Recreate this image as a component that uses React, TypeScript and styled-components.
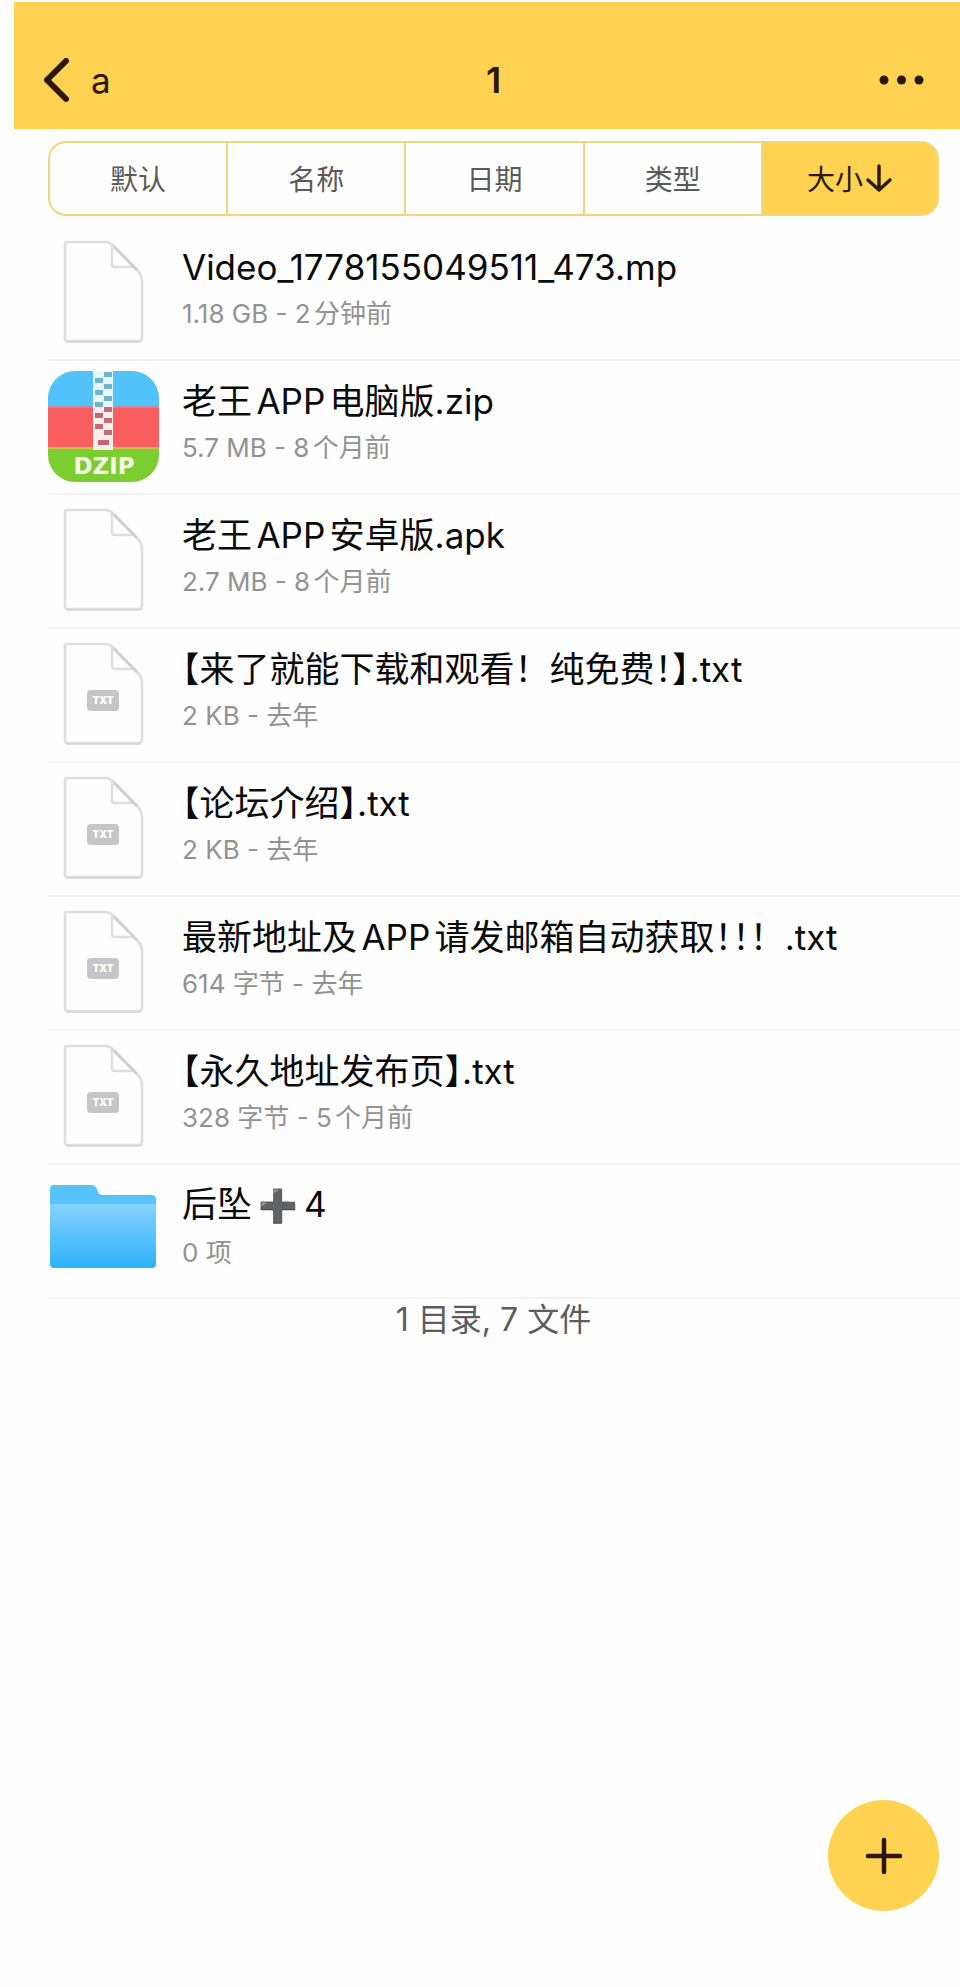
import React from "react";
import styled, { createGlobalStyle } from "styled-components";

const yellow = "#ffd351";
const outline = "#f1d77a";
const ink = "#2b1704";

const GlobalStyle = createGlobalStyle`
  * { box-sizing: border-box; }
  body {
    margin: 0;
    background: #fefefe;
    color: #0a0a0a;
    font-family: Inter, "Noto Sans CJK SC", sans-serif;
    text-autospace: normal;
  }
`;

const Page = styled.div`
  min-height: 100vh;
  padding: 2px 0 0 14px;
`;

const Header = styled.header`
  display: grid;
  grid-template-columns: 1fr auto 1fr;
  align-items: center;
  height: 127px;
  padding: 29px 17px 0 30px;
  background: ${yellow};
  color: ${ink};
  line-height: 48px;
`;

const BackLink = styled.a`
  display: flex;
  align-items: center;
  gap: 21px;
  justify-self: start;
  color: inherit;
  font-size: 35px;
  text-decoration: none;
`;

const Title = styled.h1`
  margin: 0;
  font-size: 36px;
  font-weight: 600;
`;

const Button = styled.button`
  display: flex;
  align-items: center;
  justify-content: center;
  margin: 0;
  padding: 0;
  border: 0;
  background: none;
  color: inherit;
  font: inherit;
  cursor: pointer;
`;

const MenuButton = styled(Button)`
  justify-self: end;
  padding: 12px 18px;
`;

const SortBar = styled.div`
  display: grid;
  grid-template-columns: repeat(5, 1fr);
  margin: 12px 21px 0 34px;
  height: 75px;
`;

const SortButton = styled(Button)<{ $active?: boolean }>`
  border: 2px solid ${outline};
  border-right-width: 0;
  padding-bottom: 2px;
  font-size: 28px;
  color: ${({ $active }) => ($active ? ink : "#5a5a5a")};
  background: ${({ $active }) => ($active ? yellow : "none")};

  &:first-child { border-radius: 18px 0 0 18px; }
  &:last-child { border-radius: 0 18px 18px 0; border-right-width: 2px; }
`;

const FileList = styled.ul`
  margin: 11px 0 0 34px;
  padding: 0;
  list-style: none;
`;

const FileRow = styled.li`
  height: 134px;
  border-bottom: 2px solid #f2f2f2;
`;

const FileLink = styled.a`
  display: flex;
  align-items: center;
  gap: 22px;
  height: 100%;
  color: inherit;
  text-decoration: none;
`;

const FileText = styled.div`
  flex: 1;
  min-width: 0;
  padding-bottom: 4px;
`;

const FileName = styled.div`
  font-size: 35px;
  line-height: 46px;
  white-space: nowrap;
`;

const FileMeta = styled.div`
  font-size: 26px;
  line-height: 48px;
  color: #929292;
`;

const HalfWidth = styled.span`
  font-feature-settings: "halt";
`;

const Tight = styled.span`
  text-autospace: no-autospace;
`;

const HeavyPlus = styled.span`
  margin: 0 6px;
  font-family: "DejaVu Sans", sans-serif;
  font-size: 32px;
  color: #444;
`;

const Summary = styled.p`
  margin: 0 21px 0 34px;
  font-size: 32px;
  line-height: 42px;
  text-align: center;
  color: #5c5c5c;
`;

const AddButton = styled(Button)`
  position: fixed;
  right: 21px;
  bottom: 76px;
  width: 111px;
  height: 111px;
  border-radius: 50%;
  background: ${yellow};
`;

const Icon = styled.svg`
  flex: none;
  display: block;
`;

function DocumentIcon({ label }: { label?: string }) {
  return (
    <Icon width="112" height="112" viewBox="0 0 112 112" aria-hidden="true">
      <path
        d="M19 5H57Q62 5 66 9L89 33Q94 38 94 44V101Q94 104 91 104H19Q17 104 17 101V7Q17 5 19 5Z"
        fill="#fefefe"
        stroke="#dedede"
        strokeWidth="2.6"
      />
      <path d="M64 9V27Q64 30 67 30H85" fill="none" stroke="#dedede" strokeWidth="2.4" strokeLinecap="round" />
      <path d="M66 10L89 33" stroke="#d0d0d0" strokeWidth="2.6" />
      <path d="M18 105H93" stroke="#d4d4d4" strokeWidth="1.5" />
      {label && (
        <>
          <rect x="39" y="51" width="32" height="21" rx="4" fill="#c6c6c8" />
          <text x="55" y="65" fontSize="10" fontWeight="900" textAnchor="middle" fill="#fff">
            {label}
          </text>
        </>
      )}
    </Icon>
  );
}

const leftTeeth = [7, 19, 31, 42, 53];
const rightTeeth = [1, 13, 25, 36, 47, 59];

function ZipIcon() {
  const toothColor = (y: number) => (y < 36 ? "#6fb3cd" : "#c56a70");
  return (
    <Icon width="112" height="112" viewBox="0 0 112 112" aria-hidden="true">
      <defs>
        <clipPath id="zip-shape">
          <rect width="111" height="111" rx="27" />
        </clipPath>
      </defs>
      <g clipPath="url(#zip-shape)">
        <rect width="112" height="36" fill="#51c3fa" />
        <rect y="36" width="112" height="40" fill="#fb5e60" />
        <rect y="35" width="112" height="2" fill="#b98da4" />
        <rect y="76" width="112" height="36" fill="#7bce2f" />
        <rect y="76" width="112" height="2" fill="#d3c04a" />
        <rect x="45" width="20" height="79" fill="#fbeeee" />
        <rect x="45" width="20" height="36" fill="#e9f7fd" />
        {leftTeeth.map((y) => (
          <rect key={y} x="47" y={y} width="8" height="5" fill={toothColor(y)} />
        ))}
        {rightTeeth.map((y) => (
          <rect key={y} x="56" y={y} width="8" height="5" fill={toothColor(y)} />
        ))}
        <rect x="50" y="69" width="11" height="5" fill="#c9636a" />
        <text
          x="56"
          y="103"
          fontFamily="DejaVu Sans, sans-serif"
          fontSize="23"
          fontWeight="700"
          textAnchor="middle"
          fill="#f6fbe9"
        >
          DZIP
        </text>
      </g>
    </Icon>
  );
}

function FolderIcon() {
  return (
    <Icon width="112" height="112" viewBox="0 0 112 112" aria-hidden="true">
      <defs>
        <linearGradient id="folder-front" x1="0" y1="0" x2="0" y2="1">
          <stop offset="0" stopColor="#86d3ff" />
          <stop offset="1" stopColor="#2db2f9" />
        </linearGradient>
      </defs>
      <path d="M2 14Q2 10 6 10H43Q47 10 49 14L50 17Q51 20 55 20H104Q108 20 108 24V60H2Z" fill="#56c3fa" />
      <path d="M2 29H108V89Q108 93 104 93H6Q2 93 2 89Z" fill="url(#folder-front)" />
    </Icon>
  );
}

const files = [
  { kind: "doc", name: "Video_1778155049511_473.mp", meta: "1.18 GB - 2分钟前" },
  { kind: "zip", name: "老王APP电脑版.zip", meta: "5.7 MB - 8个月前" },
  { kind: "doc", name: "老王APP安卓版.apk", meta: "2.7 MB - 8个月前" },
  { kind: "txt", name: "【来了就能下载和观看！纯免费！】.txt", meta: "2 KB - 去年" },
  { kind: "txt", name: "【论坛介绍】.txt", meta: "2 KB - 去年" },
  { kind: "txt", name: "最新地址及APP请发邮箱自动获取！！！.txt", meta: "614 字节 - 去年" },
  { kind: "txt", name: "【永久地址发布页】.txt", meta: "328 字节 - 5个月前" },
  { kind: "folder", name: "后坠➕4", meta: "0 项" },
];

const sorts = ["默认", "名称", "日期", "类型", "大小"];

function FileIcon({ kind }: { kind: string }) {
  if (kind === "zip") return <ZipIcon />;
  if (kind === "folder") return <FolderIcon />;
  return <DocumentIcon label={kind === "txt" ? "TXT" : undefined} />;
}

// Brackets and doubled exclamation marks are set at half an em.
function formatName(name: string) {
  return name.split(/([【】➕]|！(?=[！】])|\.[a-z]+$)/).map((part, i) => {
    if (part === "➕") return <HeavyPlus key={i}>{part}</HeavyPlus>;
    if (part.startsWith(".")) return <Tight key={i}>{part}</Tight>;
    if (i % 2) return <HalfWidth key={i}>{part}</HalfWidth>;
    return part;
  });
}

export default function App() {
  return (
    <Page lang="zh-CN">
      <GlobalStyle />
      <Header>
        <BackLink href="#back">
          <Icon width="26" height="44" viewBox="0 0 26 44" fill="none" aria-hidden="true">
            <path d="M22 3L3 22L22 41" stroke={ink} strokeWidth="6" strokeLinecap="round" strokeLinejoin="round" />
          </Icon>
          a
        </BackLink>
        <Title>1</Title>
        <MenuButton type="button" aria-label="更多">
          <Icon width="46" height="12" viewBox="0 0 46 12" fill={ink} aria-hidden="true">
            <circle cx="5" cy="6" r="4.5" />
            <circle cx="22.5" cy="6" r="4.5" />
            <circle cx="40" cy="6" r="4.5" />
          </Icon>
        </MenuButton>
      </Header>
      <SortBar>
        {sorts.map((label) => (
          <SortButton key={label} type="button" $active={label === "大小"}>
            {label}
            {label === "大小" && (
              <Icon width="30" height="30" viewBox="0 0 30 30" fill="none" aria-hidden="true">
                <path
                  d="M16 3V27M5 17L16 27L27 17"
                  stroke={ink}
                  strokeWidth="3.4"
                  strokeLinecap="round"
                  strokeLinejoin="round"
                />
              </Icon>
            )}
          </SortButton>
        ))}
      </SortBar>
      <main>
        <FileList>
          {files.map((file) => (
            <FileRow key={file.name}>
              <FileLink href="#open">
                <FileIcon kind={file.kind} />
                <FileText>
                  <FileName>{formatName(file.name)}</FileName>
                  <FileMeta>{file.meta}</FileMeta>
                </FileText>
              </FileLink>
            </FileRow>
          ))}
        </FileList>
        <Summary>
          1 目录<Tight>,</Tight> 7 文件
        </Summary>
      </main>
      <AddButton type="button" aria-label="添加">
        <Icon width="38" height="38" viewBox="0 0 38 38" fill="none" aria-hidden="true">
          <path d="M19 3V35M3 19H35" stroke={ink} strokeWidth="4.5" strokeLinecap="round" />
        </Icon>
      </AddButton>
    </Page>
  );
}
